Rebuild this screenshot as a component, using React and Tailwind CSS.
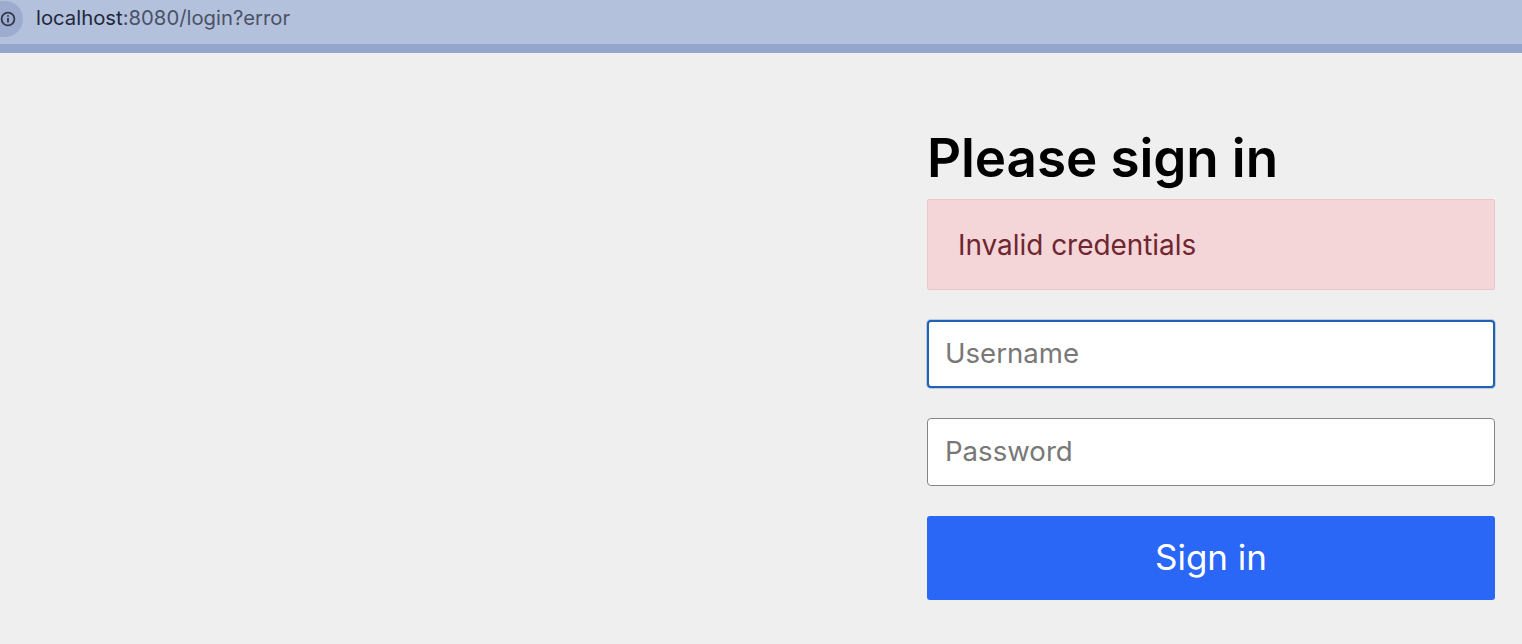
import React from 'react';

export default function App() {
  return (
    <div className="h-[644px] overflow-hidden flex flex-col bg-[#efefef] font-['Inter',sans-serif]">
      {/* browser address bar */}
      <div className="h-[53px] shrink-0 bg-[#b3c1dd] border-b-[9px] border-[#94a6cc] flex items-start pt-[1px] pr-4">
        <div className="w-[23px] h-[36px] rounded-r-full bg-[#9dacce] flex items-center justify-end pr-[7px]">
          <svg width="16" height="16" viewBox="0 0 16 16" fill="none" stroke="#33394a" strokeWidth="1.8">
            <circle cx="8" cy="8" r="6.4" />
            <path d="M8 7v4.5M8 4.2v1.6" />
          </svg>
        </div>
        <p className="ml-[13px] mt-[6px] text-[20.3px] leading-[22px] text-[#4b5266]">
          <span className="text-[#22283a]">localhost</span>:8080/login?error
        </p>
      </div>

      {/* login form */}
      <div className="flex-1 flex justify-end pr-[27px]">
        <form className="w-[568px] pt-[70px]">
          <h2 className="text-[53px] leading-[70px] font-semibold text-black tracking-[-0.1px]">Please sign in</h2>
          <div className="mt-[6px] h-[91px] bg-[#f4d5d8] border border-[#eec6ca] rounded-[2px] flex items-center pl-[30px] pt-[2px] text-[27.9px] text-[#6e2630]">
            Invalid credentials
          </div>
          <input
            placeholder="Username"
            className="mt-[30px] block w-full h-[68px] bg-white border-[2px] border-[#2160b3] shadow-[0_0_0_1px_rgba(33,96,179,0.25)] rounded-[4px] pl-[16px] pb-[2px] text-[27.6px] outline-none placeholder:text-[#787878]"
          />
          <input
            placeholder="Password"
            className="mt-[30px] block w-full h-[68px] bg-white border border-[#858585] rounded-[4px] pl-[17px] pb-[2px] text-[27.6px] outline-none placeholder:text-[#787878]"
          />
          <button
            type="button"
            className="mt-[30px] block w-full h-[84px] bg-[#2b67f6] rounded-[3px] text-white text-[35px] pb-[2px]"
          >
            Sign in
          </button>
        </form>
      </div>
    </div>
  );
}
